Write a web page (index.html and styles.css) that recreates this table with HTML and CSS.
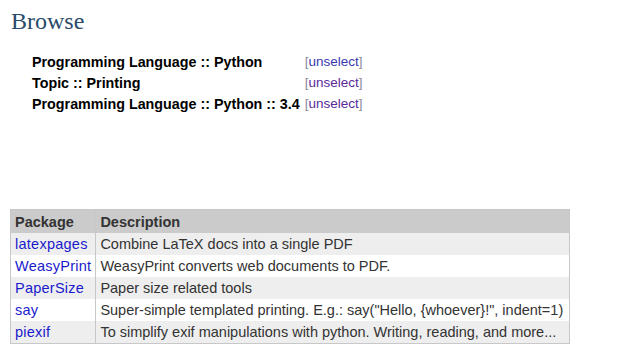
FILE: index.html
```html
<!DOCTYPE html>
<html>
<head>
<meta charset="utf-8">
<link rel="stylesheet" href="styles.css">
</head>
<body>
<h1 class="title">Browse</h1>
<table class="selected">
  <tr><td class="cat">Programming Language :: Python</td><td class="act"><span class="br">[</span><a class="un first" href="#">unselect</a><span class="br">]</span></td></tr>
  <tr><td class="cat">Topic :: Printing</td><td class="act"><span class="br">[</span><a class="un" href="#">unselect</a><span class="br">]</span></td></tr>
  <tr><td class="cat">Programming Language :: Python :: 3.4</td><td class="act"><span class="br">[</span><a class="un" href="#">unselect</a><span class="br">]</span></td></tr>
</table>
<table class="list">
  <tr class="head"><th class="c1">Package</th><th>Description</th></tr>
  <tr class="odd"><td class="c1"><a href="#">latexpages</a></td><td>Combine LaTeX docs into a single PDF</td></tr>
  <tr><td class="c1"><a href="#">WeasyPrint</a></td><td>WeasyPrint converts web documents to PDF.</td></tr>
  <tr class="odd"><td class="c1"><a href="#">PaperSize</a></td><td>Paper size related tools</td></tr>
  <tr><td class="c1"><a href="#">say</a></td><td>Super-simple templated printing. E.g.: say("Hello, {whoever}!", indent=1)</td></tr>
  <tr class="odd"><td class="c1"><a href="#">piexif</a></td><td>To simplify exif manipulations with python. Writing, reading, and more...</td></tr>
</table>
</body>
</html>
```
FILE: styles.css
```css
body {
  margin: 0;
  padding: 0 10px;
  font-family: "Liberation Sans", Arial, sans-serif;
  font-size: 14px;
  color: #000;
  background: #fff;
}
.title {
  font-family: "Liberation Serif", "Times New Roman", serif;
  font-weight: normal;
  font-size: 24px;
  color: #2a4a6a;
  margin: 7px 0 0 1px;
  line-height: 28px;
}
.selected {
  border-collapse: collapse;
  margin: 16px 0 0 20px;
}
.selected td {
  padding: 0 2px;
  height: 21px;
  vertical-align: middle;
}
.cat {
  font-weight: bold;
  font-size: 14.3px;
}
.selected td.act {
  padding-left: 3px;
  font-size: 13.5px;
}
.br {
  color: #8a8a9a;
}
.un {
  color: #5a2a9a;
  text-decoration: none;
}
.un.first {
  color: #3a3ab0;
}
.list {
  border-collapse: collapse;
  width: 560px;
  margin-top: 95px;
  border: 1px solid #c8c8c8;
  font-size: 14.5px;
}
.list th, .list td {
  text-align: left;
  padding: 0 4px;
  height: 22px;
  vertical-align: middle;
}
.list .head th {
  background: #cbcbcb;
  color: #333;
  font-weight: bold;
  height: 23px;
}
.list td.c1, .list th.c1 {
  border-right: 1px solid #c8c8c8;
  width: 1%;
  white-space: nowrap;
}
.list tr.odd td {
  background: #eeeeee;
}
.list td {
  color: #333;
}
.list a {
  color: #1a1acc;
  text-decoration: none;
  letter-spacing: 0.25px;
}
```
